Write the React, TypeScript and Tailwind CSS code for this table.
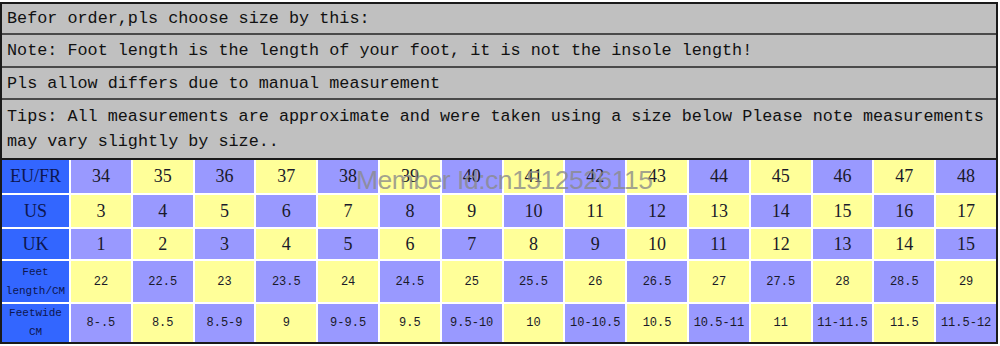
import React from 'react'

const eu = ['34', '35', '36', '37', '38', '39', '40', '41', '42', '43', '44', '45', '46', '47', '48']
const us = ['3', '4', '5', '6', '7', '8', '9', '10', '11', '12', '13', '14', '15', '16', '17']
const uk = ['1', '2', '3', '4', '5', '6', '7', '8', '9', '10', '11', '12', '13', '14', '15']
const feetLength = ['22', '22.5', '23', '23.5', '24', '24.5', '25', '25.5', '26', '26.5', '27', '27.5', '28', '28.5', '29']
const feetWide = ['8-.5', '8.5', '8.5-9', '9', '9-9.5', '9.5', '9.5-10', '10', '10-10.5', '10.5', '10.5-11', '11', '11-11.5', '11.5', '11.5-12']

const rows = [
  { label: ['EU/FR'], values: eu, big: true, h: 'h-[33px]' },
  { label: ['US'], values: us, big: true, h: 'h-[32px]' },
  { label: ['UK'], values: uk, big: true, h: 'h-[30px]' },
  { label: ['Feet', 'length/CM'], values: feetLength, big: false, h: 'h-[41px]' },
  { label: ['Feetwide', 'CM'], values: feetWide, big: false, h: 'h-[38px]' },
]

function NoteRow({ children, h, last }: { children: React.ReactNode; h: string; last?: boolean }) {
  return (
    <div
      className={`${h} flex items-center pl-[5px] border-b-2 ${last ? 'border-[#1a1a1a]' : 'border-[#4a4a4a]'} text-[16.8px] leading-[25px] text-[#111] font-['Liberation_Mono',monospace]`}
    >
      <div>{children}</div>
    </div>
  )
}

export default function App() {
  return (
    <div className="w-[1000px] h-[346px] bg-white pt-[2px]">
      <div className="relative w-[998px] border-2 border-[#1a1a1a] bg-[#c0c0c0]">
        <NoteRow h="h-[31px]">Befor order,pls choose size by this:</NoteRow>
        <NoteRow h="h-[33px]">Note: Foot length is the length of your foot, it is not the insole length!</NoteRow>
        <NoteRow h="h-[32px]">Pls allow differs due to manual measurement</NoteRow>
        <NoteRow h="h-[60px]" last>
          Tips: All measurements are approximate and were taken using a size below Please note measurements
          <br />
          may vary slightly by size..
        </NoteRow>

        {/* size table */}
        <div className="grid grid-cols-[67px_repeat(15,1fr)] gap-[2px] bg-white">
          {rows.map((row, r) => (
            <React.Fragment key={r}>
              <div
                className={`${row.h} flex flex-col items-center justify-center bg-[#3366ff] text-[#0d1650] ${
                  row.big
                    ? "text-[18px] font-['Liberation_Serif',serif]"
                    : "text-[11px] leading-[19px] font-['Liberation_Mono',monospace]"
                }`}
              >
                {row.label.map((l) => (
                  <span key={l}>{l}</span>
                ))}
              </div>
              {row.values.map((v, c) => (
                <div
                  key={c}
                  className={`${row.h} flex items-center justify-center text-[#1a1a2a] ${
                    (r + c) % 2 === 0 ? 'bg-[#9999ff]' : 'bg-[#ffff99]'
                  } ${
                    row.big
                      ? "text-[18px] font-['Liberation_Serif',serif]"
                      : "text-[12px] font-['Liberation_Mono',monospace]"
                  }`}
                >
                  {v}
                </div>
              ))}
            </React.Fragment>
          ))}
        </div>

        {/* watermark */}
        <div className="absolute left-[354px] top-[157px] text-[26.5px] text-[#8a8a8a]/80 font-['Liberation_Sans',sans-serif] tracking-[-0.5px] pointer-events-none">
          Member Id:cn1512526115
        </div>
      </div>
    </div>
  )
}
